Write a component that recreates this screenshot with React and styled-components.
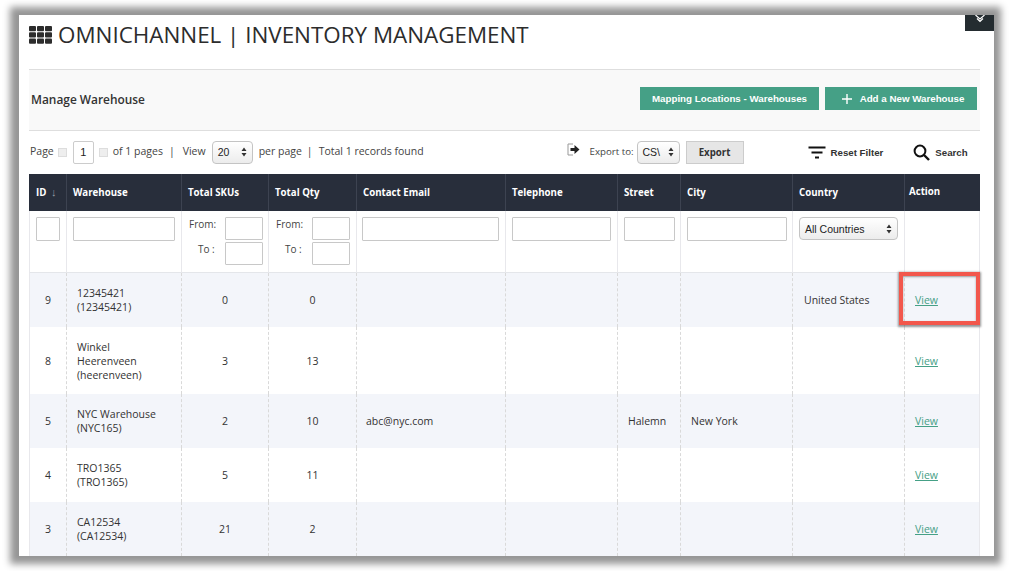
import React from "react";
import styled, { createGlobalStyle } from "styled-components";

const Global = createGlobalStyle`
  html, body { margin: 0; padding: 0; background: #fff; }
  body { width: 1014px; height: 571px; overflow: hidden; font-family: "Open Sans", sans-serif; color: #333; }
`;

const Stage = styled.div`
  padding: 15px 20px 15px 19px;
  box-sizing: border-box;
  width: 1014px;
  height: 571px;
`;
const FrameShadow = styled.div`
  box-shadow: -1px 0 7px 8px #969696;
  width: 975px;
  height: 541px;
`;
const Frame = styled.div`
  position: relative;
  width: 975px;
  height: 541px;
  background: #fff;
  overflow: hidden;
  padding: 0 14px 0 10px;
  box-sizing: border-box;
`;
const Corner = styled.div`
  position: absolute;
  right: 0;
  top: 0;
  width: 29px;
  height: 16px;
  background: #242c30;
  display: flex;
  justify-content: center;
`;
const TitleRow = styled.div`
  height: 54px;
  display: flex;
  align-items: center;
  gap: 6px;
  padding-bottom: 14px;
  box-sizing: border-box;
`;
const Title = styled.h1`
  margin: 0;
  font-size: 22.4px;
  font-weight: 400;
  color: #2c2c2c;
  line-height: 34px;
  white-space: nowrap;
`;
const ManageBar = styled.div`
  height: 62px;
  width: 951px;
  box-sizing: border-box;
  background: #f9f9f9;
  border-top: 1px solid #dedede;
  border-bottom: 1px solid #dedede;
  display: flex;
  align-items: center;
  justify-content: space-between;
  padding: 0 3px 0 2px;
`;
const ManageTitle = styled.h2`
  margin: -2px 0 0;
  font-size: 11.9px;
  font-weight: 600;
  color: #333;
`;
const BtnGroup = styled.div`
  display: flex;
  gap: 6px;
  margin-top: -3px;
`;
const GreenBtn = styled.button`
  width: ${p => p.$w}px;
  height: 23px;
  padding: 0 0 0 ${p => p.$pl || 0}px;
  border: 0;
  background: #45a086;
  color: #fff;
  font: bold 9.75px "Liberation Sans", sans-serif;
  display: flex;
  align-items: center;
  justify-content: center;
  gap: 8px;
`;
const Toolbar = styled.div`
  height: 43px;
  width: 951px;
  display: flex;
  align-items: center;
  font-size: 10.5px;
  color: #444;
  padding: 0 0 1px 1px;
  box-sizing: border-box;
`;
const Tb = styled.span`
  white-space: nowrap;
  margin-left: ${p => p.$ml || 0}px;
  margin-bottom: 2px;
  font-size: ${p => p.$fs || 10.5}px;
`;
const PagerArrow = styled.span`
  width: 9px;
  height: 9px;
  background: #eee;
  border: 1px solid #ddd;
  box-sizing: border-box;
  margin: 0 ${p => p.$mr}px 0 ${p => p.$ml}px;
  display: inline-block;
`;
const PageBox = styled.div`
  width: 21px;
  height: 23px;
  border: 1px solid #ccc;
  border-radius: 2px;
  display: flex;
  align-items: center;
  justify-content: center;
  font: 11px "Liberation Sans", sans-serif;
  color: #222;
  box-sizing: border-box;
`;
const SelectBox = styled.div`
  width: ${p => p.$w}px;
  height: ${p => p.$h || 23}px;
  margin-left: ${p => p.$ml || 0}px;
  border: 1px solid #c4c4c4;
  border-radius: 4px;
  background: linear-gradient(#fff, #ececec);
  box-sizing: border-box;
  display: flex;
  align-items: center;
  justify-content: space-between;
  padding: 0 5px;
  font: 10.5px "Liberation Sans", sans-serif;
  color: #222;
  overflow: hidden;
  white-space: nowrap;
`;
const Updown = () => (
  <svg width="6" height="10" viewBox="0 0 6 10" style={{ flex: "none" }}>
    <path d="M3 0.5 L5.5 4 H0.5 Z M3 9.5 L5.5 6 H0.5 Z" fill="#333" />
  </svg>
);
const ExportBtn = styled.button`
  width: 58px;
  height: 23px;
  margin-left: 6px;
  padding: 0;
  border: 1px solid #ccc;
  background: #e6e6e6;
  font: 700 9.7px "Open Sans", sans-serif;
  color: #333;
`;
const ToolAction = styled.span`
  display: inline-flex;
  align-items: center;
  gap: ${p => p.$gap}px;
  margin-left: ${p => p.$ml}px;
  font: bold 9.7px "Liberation Sans", sans-serif;
  color: #333;
  white-space: nowrap;
`;
const Table = styled.table`
  table-layout: fixed;
  border-collapse: separate;
  border-spacing: 0;
  width: 951px;
  font-size: 11px;
  color: #333;
`;
const Th = styled.th`
  height: 37px;
  padding: ${p => (p.$up ? "0 0 2px 4px" : "0 0 0 6px")};
  background: #282e3b;
  color: #fff;
  font-size: 9.7px;
  font-weight: 700;
  text-align: left;
  border-right: 1px solid #3d4351;
  box-sizing: border-box;
  &:first-child { padding-left: 7px; }
  &:last-child { border-right: 0; }
`;
const SortArrow = styled.span`
  color: #9a9ea6;
  margin-left: 2px;
  font-size: 11px;
  font-weight: 400;
`;
const FilterCell = styled.td`
  height: 62px;
  padding: 6px 0 0 ${p => p.$pl ?? 6}px;
  vertical-align: top;
  box-sizing: border-box;
  border-right: 1px solid #e8e8ec;
  border-bottom: 1px solid #e4e6ea;
  &:first-child { border-left: 1px solid #e8e8ec; }
`;
const FilterInput = styled.div`
  width: ${p => p.$w}px;
  height: ${p => p.$h || 24}px;
  border: 1px solid #c8c8c8;
  border-radius: 1px;
  box-sizing: border-box;
  background: #fff;
`;
const RangeRow = styled.div`
  display: grid;
  grid-template-columns: 37px 38px;
  align-items: start;
  margin-bottom: 2px;
  font-size: 10px;
  color: #444;
  line-height: 14px;
`;
const RangeLabel = styled.span`
  padding-left: ${p => (p.$to ? 10 : 1)}px;
`;
const Row = styled.tr`
  background: ${p => (p.$alt ? "#f3f5fa" : "#fff")};
  height: ${p => p.$h}px;
`;
const Td = styled.td`
  padding: 0 0 0 ${p => (p.$pl !== undefined ? p.$pl : p.$center ? 0 : 10)}px;
  text-align: ${p => (p.$center ? "center" : "left")};
  border-right: 1px dashed #d9d9d9;
  line-height: 14px;
  font-size: 10.5px;
  vertical-align: middle;
  box-sizing: border-box;
  &:first-child { border-left: 1px solid #e8e8ec; }
  &:last-child { border-right: 1px solid #e8e8ec; }
`;
const ViewLink = styled.a`
  color: #45a086;
  text-decoration: underline;
  font-size: 10.5px;
`;
const Highlight = styled.div`
  position: absolute;
  left: 880px;
  top: 257px;
  width: 81px;
  height: 53px;
  box-sizing: border-box;
  border: 4px solid #f2574c;
  box-shadow: 0 1px 2px 1px rgba(70,70,70,.55), inset 0 1px 2px rgba(70,70,70,.5);
`;

const cols = [38, 115, 87, 88, 149, 112, 63, 112, 112, 75];
const heads = ["Warehouse", "Total SKUs", "Total Qty", "Contact Email", "Telephone", "Street", "City", "Country"];
const rows = [
  { id: 9, wh: ["12345421", "(12345421)"], s: 0, q: 0, country: "United States", h: 54, alt: true },
  { id: 8, wh: ["Winkel", "Heerenveen", "(heerenveen)"], s: 3, q: 13, h: 67 },
  { id: 5, wh: ["NYC Warehouse", "(NYC165)"], s: 2, q: 10, email: "abc@nyc.com", street: "Halemn", city: "New York", h: 54, alt: true },
  { id: 4, wh: ["TRO1365", "(TRO1365)"], s: 5, q: 11, h: 54 },
  { id: 3, wh: ["CA12534", "(CA12534)"], s: 21, q: 2, h: 54, alt: true },
];

const GridIcon = () => (
  <svg width="23" height="18" viewBox="0 0 23 18">
    {[0, 1, 2].flatMap(r => [0, 1, 2].map(c => (
      <rect key={r + "-" + c} x={c * 8} y={r * 6.3} width="7" height="5.2" rx="1" fill="#2c2c2c" />
    )))}
  </svg>
);
const Chevron = () => (
  <svg width="12" height="8" viewBox="0 0 12 8">
    <path d="M1.5 0 L6 4 L10.5 0 M3 3.5 L6 6.5 L9 3.5" fill="none" stroke="#fff" strokeWidth="1.2" />
  </svg>
);
const ExportIcon = () => (
  <svg width="14" height="13" viewBox="0 0 14 13">
    <path d="M6 1 H1 V12 H6" fill="none" stroke="#999" strokeWidth="1" />
    <path d="M3.5 5 H7.5 V2 L12.5 6.5 L7.5 11 V8 H3.5 Z" fill="#222" />
  </svg>
);
const FilterIcon = () => (
  <svg width="18" height="13" viewBox="0 0 18 13">
    <path d="M0.5 1.5 H17.5 M3.5 6.5 H14.5 M7 11.5 H11" stroke="#111" strokeWidth="2" />
  </svg>
);
const SearchIcon = () => (
  <svg width="17" height="17" viewBox="0 0 17 17">
    <circle cx="7" cy="7" r="5.4" fill="none" stroke="#111" strokeWidth="2" />
    <path d="M11 11 L16 16" stroke="#111" strokeWidth="2.4" />
  </svg>
);
const PlusIcon = () => (
  <svg width="10" height="10" viewBox="0 0 10 10">
    <path d="M5 0 V10 M0 5 H10" stroke="#fff" strokeWidth="1.4" />
  </svg>
);

const Range = () => (
  <>
    <RangeRow><RangeLabel>From:</RangeLabel><FilterInput $w={38} $h={23} /></RangeRow>
    <RangeRow><RangeLabel $to>To :</RangeLabel><FilterInput $w={38} $h={23} /></RangeRow>
  </>
);

export default function App() {
  return (
    <Stage>
      <Global />
      <FrameShadow>
        <Frame>
          <Corner><Chevron /></Corner>
          <TitleRow>
            <GridIcon />
            <Title>OMNICHANNEL | INVENTORY MANAGEMENT</Title>
          </TitleRow>
          <ManageBar>
            <ManageTitle>Manage Warehouse</ManageTitle>
            <BtnGroup>
              <GreenBtn $w={179}>Mapping Locations - Warehouses</GreenBtn>
              <GreenBtn $w={152} $pl={4}><PlusIcon />Add a New Warehouse</GreenBtn>
            </BtnGroup>
          </ManageBar>
          <Toolbar>
            <Tb>Page</Tb>
            <PagerArrow $ml={4} $mr={6} />
            <PageBox>1</PageBox>
            <PagerArrow $ml={5} $mr={5} />
            <Tb>of 1 pages</Tb>
            <Tb $ml={6}>|</Tb>
            <Tb $ml={8}>View</Tb>
            <SelectBox $w={41} $ml={6}>20<Updown /></SelectBox>
            <Tb $ml={6}>per page</Tb>
            <Tb $ml={5}>|</Tb>
            <Tb $ml={6}>Total 1 records found</Tb>
            <Tb $ml={143}><ExportIcon /></Tb>
            <Tb $ml={9} $fs={9.7}>Export to:</Tb>
            <SelectBox $w={43} $ml={3}>CS\<Updown /></SelectBox>
            <ExportBtn>Export</ExportBtn>
            <ToolAction $gap={5} $ml={64}><FilterIcon />Reset Filter</ToolAction>
            <ToolAction $gap={5} $ml={30}><SearchIcon />Search</ToolAction>
          </Toolbar>
          <Table>
            <colgroup>{cols.map((w, i) => <col key={i} style={{ width: w }} />)}</colgroup>
            <thead>
              <tr>
                <Th $up>ID <SortArrow>↓</SortArrow></Th>
                {heads.map(h => <Th key={h}>{h}</Th>)}
                <Th $up>Action</Th>
              </tr>
            </thead>
            <tbody>
              <tr>
                <FilterCell><FilterInput $w={24} /></FilterCell>
                <FilterCell><FilterInput $w={102} /></FilterCell>
                <FilterCell><Range /></FilterCell>
                <FilterCell><Range /></FilterCell>
                <FilterCell $pl={5}><FilterInput $w={137} /></FilterCell>
                <FilterCell><FilterInput $w={99} /></FilterCell>
                <FilterCell><FilterInput $w={51} /></FilterCell>
                <FilterCell><FilterInput $w={100} /></FilterCell>
                <FilterCell><SelectBox $w={99}>All Countries<Updown /></SelectBox></FilterCell>
                <FilterCell />
              </tr>
              {rows.map(r => (
                <Row key={r.id} $alt={r.alt} $h={r.h}>
                  <Td $center>{r.id}</Td>
                  <Td>{r.wh.map((l, i) => <div key={i}>{l}</div>)}</Td>
                  <Td $center>{r.s}</Td>
                  <Td $center>{r.q}</Td>
                  <Td $pl={9}>{r.email}</Td>
                  <Td />
                  <Td>{r.street}</Td>
                  <Td>{r.city}</Td>
                  <Td $pl={11}>{r.country}</Td>
                  <Td><ViewLink>View</ViewLink></Td>
                </Row>
              ))}
            </tbody>
          </Table>
          <Highlight />
        </Frame>
      </FrameShadow>
    </Stage>
  );
}
